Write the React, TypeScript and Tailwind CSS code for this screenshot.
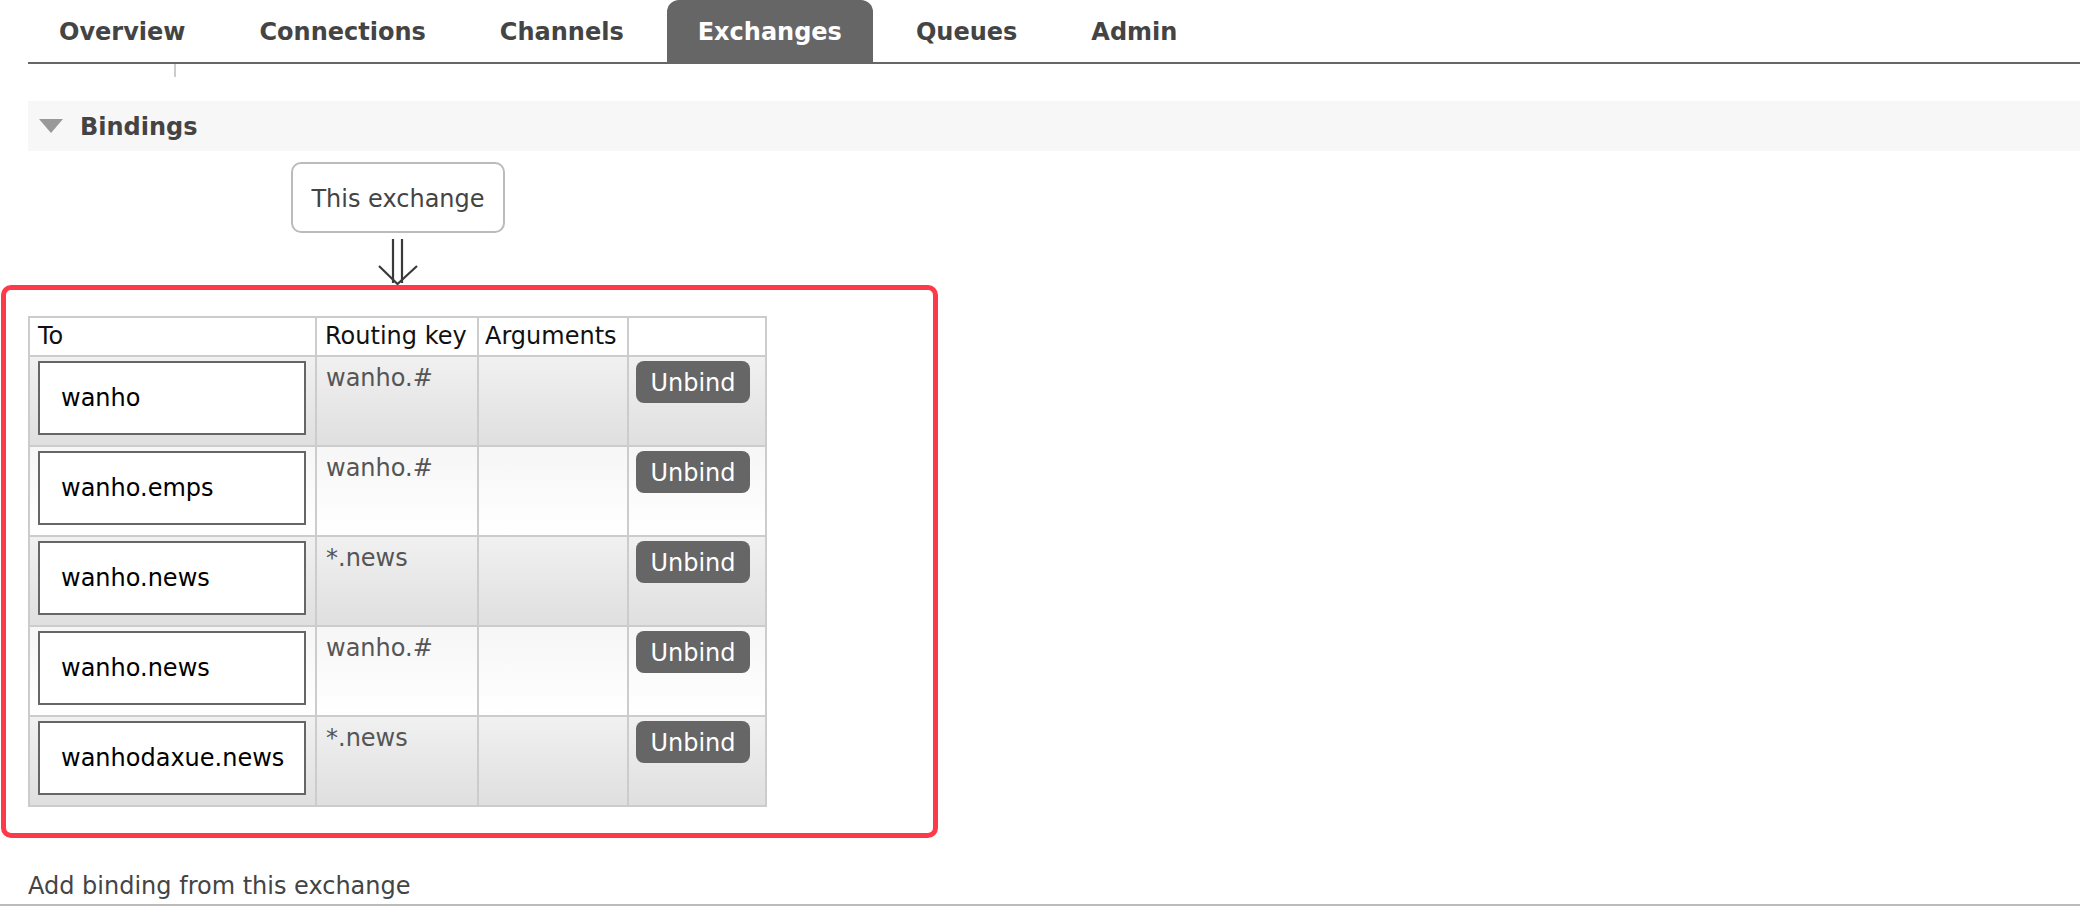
import React from 'react'

const font = { fontFamily: '"DejaVu Sans", Verdana, sans-serif' }

const tabs = ['Overview', 'Connections', 'Channels', 'Exchanges', 'Queues', 'Admin']

const bindings = [
  { to: 'wanho', key: 'wanho.#' },
  { to: 'wanho.emps', key: 'wanho.#' },
  { to: 'wanho.news', key: '*.news' },
  { to: 'wanho.news', key: 'wanho.#' },
  { to: 'wanhodaxue.news', key: '*.news' },
]

function DownArrow() {
  return (
    <svg width="40" height="46" viewBox="0 0 40 46" className="ml-[350px] mt-[6px] block">
      <path d="M15 0 V44 M24 0 V44" stroke="#3a3a3a" strokeWidth="2.2" fill="none" />
      <path d="M1 27 L19.5 45 L39 27" stroke="#3a3a3a" strokeWidth="2.2" fill="none" />
    </svg>
  )
}

export default function App() {
  return (
    <div className="relative min-h-[912px] w-[2080px] bg-white text-[24px] text-[#444]" style={font}>
      {/* tabs */}
      <nav className="ml-[28px] flex h-[64px] gap-[12px] border-b-2 border-[#666]">
        {tabs.map((t) => (
          <div
            key={t}
            className={
              t === 'Exchanges'
                ? 'flex h-[62px] items-center rounded-t-[12px] bg-[#666] px-[31px] pt-[2px] font-bold text-white'
                : 'flex h-[62px] items-center px-[31px] pt-[2px] font-bold text-[#444]'
            }
          >
            {t}
          </div>
        ))}
      </nav>
      <div className="ml-[174px] h-[13px] w-[2px] bg-[#ccc]" />

      {/* section */}
      <div className="ml-[28px]">
        <div className="mt-[24px] flex h-[50px] items-center bg-[#f7f7f7]">
          <svg width="24" height="14" viewBox="0 0 24 14" className="ml-[11px]">
            <path d="M0 0 H24 L12 14 Z" fill="#999" />
          </svg>
          <span className="ml-[17px] pt-[2px] font-bold text-[#444]">Bindings</span>
        </div>

        <div className="ml-[263px] mt-[11px] flex h-[71px] w-[214px] items-center justify-center rounded-[10px] border-2 border-[#bbb] pt-[2px] text-[#444]">
          This exchange
        </div>
        <DownArrow />

        <table className="mt-[31px] w-[737px] table-fixed border-collapse">
          <colgroup>
            <col className="w-[287px]" />
            <col className="w-[162px]" />
            <col className="w-[150px]" />
            <col className="w-[138px]" />
          </colgroup>
          <thead>
            <tr className="h-[39px] bg-white text-[#111]">
              <th className="border-2 border-[#ccc] px-[8px] text-left font-normal leading-[35px]">To</th>
              <th className="border-2 border-[#ccc] px-[8px] text-left font-normal leading-[35px]">Routing key</th>
              <th className="border-2 border-[#ccc] px-[6px] text-left font-normal leading-[35px]">Arguments</th>
              <th className="border-2 border-[#ccc]" />
            </tr>
          </thead>
          <tbody>
            {bindings.map((b, i) => (
              <tr
                key={i}
                className={
                  i % 2 === 0
                    ? 'h-[90px] bg-gradient-to-b from-[#f1f1f1] to-[#dfdfdf]'
                    : 'h-[90px] bg-gradient-to-b from-[#f6f6f6] to-white'
                }
              >
                <td className="border-2 border-[#ccc] px-[8px] pb-[9px] pt-[4px] align-top">
                  <div className="flex h-[74px] w-[268px] items-center border-2 border-[#666] bg-white pl-[21px] text-black">
                    {b.to}
                  </div>
                </td>
                <td className="border-2 border-[#ccc] px-[9px] pt-[3px] align-top text-[#555]">{b.key}</td>
                <td className="border-2 border-[#ccc]" />
                <td className="border-2 border-[#ccc] px-[7px] pt-[4px] align-top">
                  <button className="flex h-[42px] w-[114px] items-center justify-center rounded-[8px] bg-[#666] pt-[1px] text-white">
                    Unbind
                  </button>
                </td>
              </tr>
            ))}
          </tbody>
        </table>

        <div className="mt-[65px] leading-[28px] text-[#444]">Add binding from this exchange</div>
      </div>
      <div className="mt-[4px] h-[2px] w-full bg-[#bbb]" />

      {/* highlight annotation */}
      <div className="pointer-events-none absolute left-[1px] top-[285px] h-[553px] w-[937px] rounded-[10px] border-[5px] border-[#fd3a4a]" />
    </div>
  )
}
